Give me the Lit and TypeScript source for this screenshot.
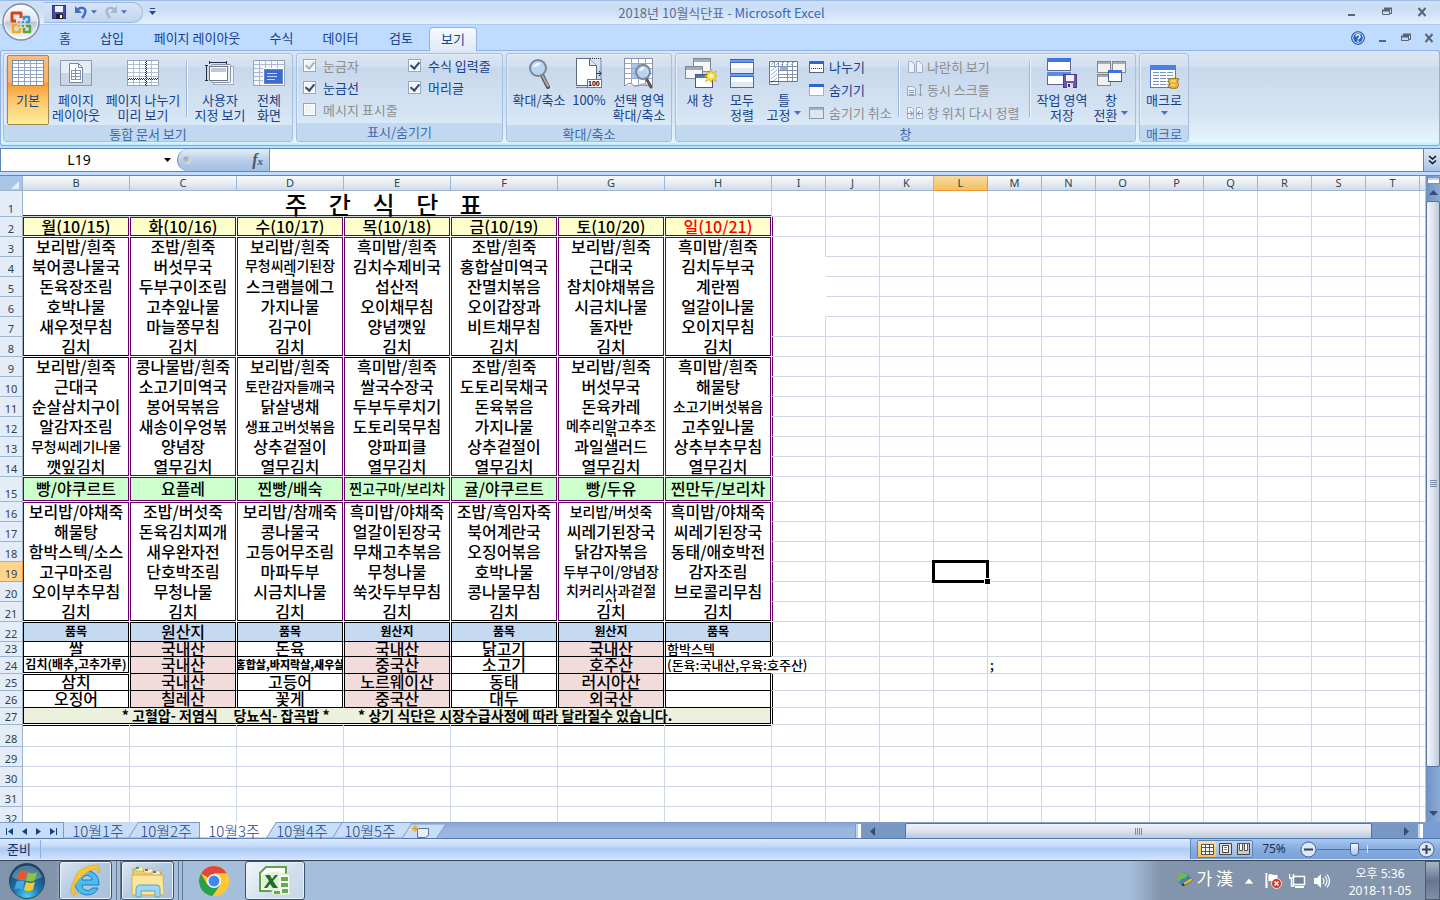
import { LitElement, html, css, nothing } from "lit";
import { customElement } from "lit/decorators.js";
import { classMap } from "lit/directives/class-map.js";
import { styleMap } from "lit/directives/style-map.js";

/* ---------- icons ---------- */

const lines = (xs: number[], ys: number[], x0: number, y0: number, x1: number, y1: number) =>
  xs.map((x) => `M${x} ${y0}V${y1}`).join("") + ys.map((y) => `M${x0} ${y}H${x1}`).join("");

const icoNormal = html`<svg width="34" height="32" viewBox="0 0 34 32">
  <rect x="1.5" y="3.5" width="31" height="25" fill="#fff" stroke="#7488a8"/>
  <path d="${lines([7.5, 13.5, 19.5, 25.5], [6.5, 10.5, 13.5, 17.5, 20.5, 24.5], 2, 4, 32, 28)}" stroke="#93a4c4" fill="none"/>
</svg>`;
const icoLayout = html`<svg width="34" height="32" viewBox="0 0 34 32">
  <rect x="1.5" y="3.5" width="31" height="25" fill="#e6ecf4" stroke="#8c9bb0"/>
  <path d="M2 16h30v12H2z" fill="#c9d6e6"/>
  <path d="M10.500 6.500h9l4 4v15h-13z" fill="#fff" stroke="#7b8798"/>
  <path d="M19.500 6.500v4h4" fill="none" stroke="#7b8798"/>
  <path d="M12 13.500h10M12 16.500h10M12 19.500h10M12 22.500h10M12.500 13v10M16.500 11v12M21.500 13v10" stroke="#8294b2" fill="none"/>
</svg>`;
const icoBreak = html`<svg width="34" height="32" viewBox="0 0 34 32">
  <rect x="1.500" y="3.500" width="31" height="25" fill="#fff" stroke="#96a3b5"/>
  <path d="${lines([7.5, 13.5, 25.5], [7.5, 11.5, 15.5, 19.5, 25.5], 2, 4, 32, 28)}" stroke="#b4c0d2" fill="none"/>
  <path d="M20.500 4v25M2 22.500h30" stroke="#222f4e" stroke-dasharray="1 1" fill="none"/>
  <path d="M19.500 5v24M3 21.500h30" stroke="#222f4e" stroke-dasharray="1 1" fill="none"/>
</svg>`;
const icoCustom = html`<svg width="34" height="32" viewBox="0 0 34 32">
  <rect x="10.500" y="9.500" width="20" height="18" fill="#f2f4f8" stroke="#a3abb8"/>
  <rect x="8.500" y="7.500" width="19" height="18" rx="1" fill="#e8ecf3" stroke="#8a94a6"/>
  <rect x="6.500" y="9.500" width="18" height="14" fill="#fff" stroke="#68758a"/>
  <rect x="8" y="11" width="15" height="4" fill="#c2c9d4"/>
  <path d="M6 5.500h18M6.500 4v3M23.500 4v3M3.500 8v16M2 8.500h3M2 23.500h3" stroke="#1f2c48" fill="none"/>
</svg>`;
const icoFull = html`<svg width="34" height="32" viewBox="0 0 34 32">
  <rect x="1.500" y="3.500" width="31" height="25" fill="#f3f6fa" stroke="#96a3b5"/>
  <path d="${lines([7.5, 13.5, 19.5, 25.5], [7.5, 11.5, 15.5, 19.5, 23.5], 2, 4, 32, 28)}" stroke="#adb8cb" fill="none"/>
  <rect x="11.500" y="11.500" width="20" height="16" fill="#5e86dc" stroke="#fff"/>
  <rect x="13" y="13" width="17" height="13" fill="#3e6bd0"/>
  <path d="M15 16.500h10M15 19.500h10M15 22.500h8" stroke="#c5d6fa"/>
</svg>`;
const icoZoom = html`<svg width="34" height="32" viewBox="-6 -1 34 32">
  <path d="M14 17l6 12" stroke="#5a5552" stroke-width="4" stroke-linecap="round"/>
  <path d="M14 17l6 11" stroke="#b3aaa4" stroke-width="2" stroke-linecap="round"/>
  <circle cx="10" cy="10" r="8" fill="#bcd6f1" stroke="#7a8797" stroke-width="2"/>
  <path d="M5 9a6 5 0 0 1 8-4c-2 3-5 4-8 4z" fill="#eef6ff"/>
</svg>`;
const ico100 = html`<svg width="34" height="32" viewBox="0 0 34 32">
  <path d="M4 1.500h25v28M4.500 30.500h25" fill="none" stroke="#26324c" stroke-dasharray="1 1"/>
  <path d="M4.500 1.500h13l7 7v20h-20z" fill="#fff" stroke="#5f6a7c"/>
  <path d="M17.500 1.500v7h7" fill="#dfe5ee" stroke="#5f6a7c"/>
  <path d="M24 16.500h5M27 14l2 2.500-2 2.500" stroke="#26324c" fill="none"/>
  <rect x="15.500" y="22.500" width="14" height="8" fill="#fff" stroke="#6c7688"/>
  <text x="16" y="29" font-size="7" font-weight="700" font-family="Liberation Sans, sans-serif">100</text>
</svg>`;
const icoZoomSel = html`<svg width="34" height="32" viewBox="0 0 34 32">
  <rect x="2.500" y="1.500" width="28" height="27" fill="#fff" stroke="#8793a8"/>
  <rect x="9" y="6" width="15" height="16" fill="#a9c3f3"/>
  <path d="${lines([9.5, 16.5, 23.5], [6.5, 11.5, 16.5, 21.5], 3, 2, 30, 28)}" stroke="#9ba9c2" fill="none"/>
  <path d="M3 29c4-4 6-3 8-1s5 1 7 0 5-2 7 0" fill="#eef1f5" stroke="#77808f"/>
  <path d="M24 21l5 9" stroke="#5a5552" stroke-width="3" stroke-linecap="round"/>
  <circle cx="21" cy="15" r="7" fill="#bcd6f1" fill-opacity=".85" stroke="#7a8797" stroke-width="2"/>
  <path d="M17 14a5 4 0 0 1 6-4c-1 3-3 4-6 4z" fill="#eef6ff"/>
</svg>`;
const icoNewWin = html`<svg width="34" height="32" viewBox="0 0 34 32">
  <rect x="10.500" y="1.500" width="17" height="13" fill="#f6f7fa" stroke="#7e8898"/><path d="M11 2h16v3H11z" fill="#a3abb8"/>
  <rect x="2.500" y="9.500" width="17" height="12" fill="#f6f7fa" stroke="#7e8898"/><path d="M3 10h16v3H3z" fill="#a3abb8"/>
  <rect x="12.500" y="17.500" width="17" height="13" fill="#fff" stroke="#4c5a78"/><path d="M13 18h16v3H13z" fill="#3f74dc"/>
  <path d="M28 12l1.500 4 4-2-2 4 3 1-3 1.500 2 4-4-2-1.500 3-1.500-3-4 2 2-4-3-1.500 3-1-2-4 4 2z" fill="#ffe23a" stroke="#d79f12" stroke-width=".7"/>
  <circle cx="28" cy="19" r="2" fill="#fffbe0"/>
</svg>`;
const icoArrange = html`<svg width="34" height="32" viewBox="0 0 34 32">
  <rect x="5.500" y="2.500" width="23" height="28" fill="#fff" stroke="#5a6a8c"/>
  <path d="M5 2h24v4H5zM5 16h24v4H5z" fill="#6c9cf0"/><path d="M5 2.500h24M5 16.500h24M5 19.500h24M5 5.500h24" stroke="#3a66c4"/>
  <path d="M6 11h22v5H6zM6 25h22v5H6z" fill="#e2e9f4"/>
</svg>`;
const icoFreeze = html`<svg width="34" height="32" viewBox="0 0 34 32">
  <path d="M2.500 4.500h28v20h-19v3h-9z" fill="#fff" stroke="#6b7890"/>
  <path d="${lines([20.5, 25.5], [9.5, 13.5, 17.5, 20.5], 11, 5, 30, 24)}M11.500 5v22M3 9.500h9M7.500 5v5M15.500 5v5" stroke="#8794aa" fill="none"/>
  <path d="M4 8l3-3M9 8l3-3M14 8l3-3M19 8l3-3M24 8l3-3M4 14l6-5M4 18l6-5M4 22l6-5M4 26l6-5" stroke="#93a9d0" fill="none"/>
  <path d="M13 10h8v3h-8z" fill="#8eb0f2"/>
  <path d="M2.500 24.500h9" stroke="#4c5a78"/>
</svg>`;
const icoWorkspace = html`<svg width="34" height="32" viewBox="0 0 34 32">
  <rect x="2.500" y="1.500" width="23" height="12" fill="#fff" stroke="#5a6a8c"/><path d="M2 1h24v4H2z" fill="#3f74dc"/>
  <rect x="2.500" y="15.500" width="23" height="12" fill="#fff" stroke="#5a6a8c"/><path d="M2 15h24v4H2z" fill="#5a8bea"/>
  <rect x="18.500" y="17.500" width="13" height="13" fill="#6c57a8" stroke="#4a3b86"/>
  <path d="M21 18h8v6h-8z" fill="#f2f0fa"/><path d="M22 26h6v5h-6z" fill="#dcd8ee"/><path d="M23 27h2v3h-2z" fill="#3b2d70"/>
</svg>`;
const icoSwitch = html`<svg width="34" height="32" viewBox="0 0 34 32">
  <g fill="#f1f1ef" stroke="#85888c"><rect x="3.500" y="4.500" width="13" height="11"/><rect x="18.500" y="4.500" width="13" height="11"/><rect x="3.500" y="17.500" width="13" height="11"/></g>
  <path d="M4 5h12v2H4zM19 5h12v2H19zM4 18h12v2H4z" fill="#a9acb0"/>
  <rect x="14.500" y="13.500" width="13" height="11" fill="#fff" stroke="#3d5fb0"/><path d="M15 13h13v3H15z" fill="#3f74dc"/>
</svg>`;
const icoMacro = html`<svg width="34" height="32" viewBox="0 0 34 32">
  <rect x="3.500" y="8.500" width="25" height="22" fill="#fff" stroke="#5d7ab8"/><path d="M3 8h26v5H3z" fill="#4a80e4"/>
  <path d="M6 15.500h20M6 18.500h20M6 21.500h20M6 24.500h20M6 27.500h20" stroke="#7792c6" stroke-dasharray="6 1"/>
  <path d="M22 22c3-1 7-1 10 0l-2 3c2 1 2 4 0 6-3 1-7 0-9-1l2-3c-2-1-2-3-1-5z" fill="#e9b63a" stroke="#93700f"/><path d="M24 24h5M24 28h4" stroke="#fff0b0"/>
</svg>`;

const icoSplit = html`<svg width="16" height="16" viewBox="0 0 16 16"><rect x=".5" y="2.500" width="14" height="11" fill="#fff" stroke="#54627e"/><path d="M0 2h15v3H0z" fill="#2f66d4"/><path d="M2 9.500h11" stroke="#222f4e" stroke-dasharray="1 1"/></svg>`;
const icoHide = html`<svg width="16" height="16" viewBox="0 0 16 16"><rect x=".5" y="2.500" width="14" height="11" fill="#fff" stroke="#777" stroke-dasharray="1 1"/><path d="M0 2h15v3H0z" fill="#2f66d4"/></svg>`;
const icoUnhide = html`<svg width="16" height="16" viewBox="0 0 16 16"><rect x=".5" y="2.500" width="14" height="11" fill="#dfe6f0" stroke="#8c98ac"/><path d="M1 3h13v2H1z" fill="#a4b0c6"/></svg>`;
const icoSide = html`<svg width="16" height="16" viewBox="0 0 16 16"><path d="M1.500 2.500h3l3 3v8h-6zM9.500 2.500h3l3 3v8h-6z" fill="#edf1f7" stroke="#a3aec2"/></svg>`;
const icoSync = html`<svg width="16" height="16" viewBox="0 0 16 16"><path d="M.5 4.500h5l3 2v7h-8z" fill="#edf1f7" stroke="#9ba6ba"/><path d="M2 8.500h5M2 10.500h5M2 12.500h5M13.500 2v12M11.500 4l2-2 2 2M11.500 12l2 2 2-2" stroke="#8d9ab2" fill="none"/></svg>`;
const icoReset = html`<svg width="16" height="16" viewBox="0 0 16 16"><path d="M.5 2.500h4l2 2v9h-6zM9.500 2.500h4l2 2v9h-6z" fill="#edf1f7" stroke="#a3aec2"/><path d="M0 8.500h5M3 6l3 2.500L3 11M16 8.500h-5M13 6l-3 2.500 3 2.500" stroke="#7e8dab" fill="none"/></svg>`;

const officeOrb = html`<svg width="40" height="42" viewBox="0 0 40 42">
  <defs>
    <linearGradient id="orb" x1="0" y1="0" x2="0" y2="1"><stop offset="0" stop-color="#fdfdfe"/><stop offset=".48" stop-color="#dfe3ea"/><stop offset=".5" stop-color="#bcc6d6"/><stop offset="1" stop-color="#fff"/></linearGradient>
  </defs>
  <circle cx="20" cy="21" r="18" fill="url(#orb)" stroke="#7e8fa9" stroke-width="1.500"/>
  <circle cx="20" cy="21" r="16.500" fill="none" stroke="#fff" stroke-opacity=".7"/>
  <g fill="none" stroke-linejoin="round">
    <path d="M15 20h-4v-8h9v5" stroke="#d8421a" stroke-width="3"/>
    <path d="M23 19v-3h5v5h-3" stroke="#3b92d6" stroke-width="2.500"/>
    <path d="M16 24h-4v7h7v-4" stroke="#f4ac1c" stroke-width="2.500"/>
    <path d="M23 27v4h6v-6h-4" stroke="#5aa63a" stroke-width="2.500"/>
  </g>
  <path d="M17 20h2v2h-2z" fill="#ef8b2e"/><path d="M21 20h2v2h-2z" fill="#3b92d6"/><path d="M17 24h2v2h-2z" fill="#f4ac1c"/><path d="M21 24h2v2h-2z" fill="#5aa63a"/>
</svg>`;
const icoSave = html`<svg width="16" height="16" viewBox="0 0 16 16"><rect x="1.500" y="1.500" width="13" height="13" fill="#4a49a8" stroke="#32317e"/><path d="M4 2h8v6H4z" fill="#eef2fb"/><path d="M5 10h7v5H5z" fill="#222"/><path d="M9 11h2v3H9z" fill="#fff"/></svg>`;
const icoUndo = html`<svg width="16" height="16" viewBox="0 0 16 16"><path d="M4 6c4-4 10-2 8 3-.4 2-1.500 3.500-3 5" fill="none" stroke="#3e6fc4" stroke-width="2.500"/><path d="M2 2v7h7z" fill="#3e6fc4"/></svg>`;
const icoRedo = html`<svg width="16" height="16" viewBox="0 0 16 16"><path d="M12 6c-4-4-10-2-8 3 .4 2 1.500 3.500 3 5" fill="none" stroke="#a9b7cd" stroke-width="2.500"/><path d="M14 2v7H7z" fill="#a9b7cd"/></svg>`;
const icoCaret = html`<svg class="caret" width="7" height="4" viewBox="0 0 7 4"><path d="M0 0h7L3.500 4z" fill="currentColor"/></svg>`;
const icoQatMore = html`<svg width="7" height="8" viewBox="0 0 7 8"><path d="M1 .500h5" stroke="#2b4a80"/><path d="M0 3h7L3.500 7z" fill="#2b4a80"/></svg>`;
const icoMin = html`<svg width="10" height="10" viewBox="0 0 10 10"><path d="M1 8h7" stroke="#5b6572" stroke-width="2"/></svg>`;
const icoRestore = html`<svg width="10" height="10" viewBox="0 0 10 10"><path d="M2.500 3V1.500h7v5H8" fill="none" stroke="#5b6572"/><path d="M2 1.500h8M0 3.500h8" stroke="#5b6572" stroke-width="2"/><path d="M.5 3.500h7v4h-7z" fill="none" stroke="#5b6572"/></svg>`;
const icoClose = html`<svg width="10" height="10" viewBox="0 0 10 10"><path d="M1.500 1l7 8M8.500 1l-7 8" stroke="#5b6572" stroke-width="2"/></svg>`;
const icoHelp = html`<svg width="14" height="14" viewBox="0 0 14 14"><circle cx="7" cy="7" r="6.300" fill="#2a66c8" stroke="#1d4a98"/><circle cx="7" cy="7" r="5.200" fill="none" stroke="#d9e8ff"/><path d="M5 5.500c.2-2.500 4.200-2.200 4 .2C8.900 7 7.200 7 7 8.500M7 9.500v1.500" stroke="#fff" stroke-width="1.400" fill="none"/></svg>`;
const icoChevrons = html`<svg width="9" height="10" viewBox="0 0 9 10"><path d="M1 1l3.500 3L8 1M1 5.500l3.500 3L8 5.500" stroke="#111" stroke-width="1.500" fill="none"/></svg>`;

const icoStart = html`<svg width="38" height="38" viewBox="0 0 38 38">
  <defs><radialGradient id="st" cx=".5" cy=".95" r=".95"><stop offset="0" stop-color="#4fd4f5"/><stop offset=".4" stop-color="#1d77b0"/><stop offset="1" stop-color="#123a63"/></radialGradient></defs>
  <circle cx="19" cy="19" r="17.500" fill="url(#st)" stroke="#2c4460"/>
  <path d="M4 15a15.500 15.500 0 0 1 30 0c-8 5-22 5-30 0z" fill="#fff" opacity=".28"/>
  <path d="M11 10c3-2 5-1.500 8 0l-2 8c-3-1.500-5-1.500-8 0z" fill="#e8582a"/>
  <path d="M20 10.500c3 1.500 6 1.500 9-.5l-2 8c-3 2-6 2-9 .5z" fill="#8cc63f"/>
  <path d="M8.500 19.500c3-1.500 5-1.500 8 0l-2 8c-3-1.500-5-1.500-8 0z" fill="#43a7e6"/>
  <path d="M18 20c3 1.500 6 1.500 9-.5l-2 8c-3 2-6 2-9 .5z" fill="#fcc92d"/>
</svg>`;
const icoIE = html`<svg width="34" height="34" viewBox="0 0 34 34">
  <path d="M30 21H13c0 6 8 7 10 3h6c-3 10-23 10-23-6C7 2 31 3 30 21zM13 16h10c0-6-10-6-10 0z" fill="#4cbcf0" stroke="#1a7cc0"/>
  <path d="M9 8C16 2 30-2 31 4c.5 2-1 5-2 6 .5-2 1-5-2-5-7 0-21 11-22 20-1 5 4 4 7 2-4 5-11 5-10-1C3 20 6 13 9 8z" fill="#fbc62c" stroke="#dfa016" stroke-width=".6"/>
</svg>`;
const icoFolder = html`<svg width="36" height="34" viewBox="0 0 36 34">
  <path d="M3 5h9l2 3h17v22H3z" fill="#f0cf74" stroke="#c99f38"/>
  <path d="M6 3h7v4H6zM14 5h9v4h-9zM22 7h8v4h-8z" fill="#fdf4cf" stroke="#c9a94c" stroke-width=".6"/>
  <path d="M6 3h3v2H6z" fill="#2eb04c"/><path d="M15 5h3v2h-3z" fill="#d9432f"/><path d="M23 7h3v2h-3z" fill="#3b82d8"/>
  <path d="M2 11h31l1 18c0 1-1 2-2 2H4c-1 0-2-1-2-2z" fill="#fae69c" stroke="#d4ae4c"/>
  <path d="M6 33v-8c0-3 2-4 4-4h16c3 0 4 1 4 4v8h-5v-6H11v6z" fill="#9fd7f0" stroke="#5aa2cb"/>
</svg>`;
const icoChrome = html`<svg width="32" height="32" viewBox="0 0 32 32">
  <circle cx="16" cy="16" r="15" fill="#fcc934"/>
  <path d="M16 16L3 8.500A15 15 0 0 1 29 8.500H16z" fill="#e2463a"/>
  <path d="M3 8.500L9.500 19.750 16 23.500 14.500 31A15 15 0 0 1 3 8.500z" fill="#2aa04f"/>
  <path d="M14.500 31l8-11.250L16 16l-6.500 3.750z" fill="#2aa04f"/>
  <path d="M29 8.500H16v7.500l6.500 3.750L15 31A15 15 0 0 0 29 8.500z" fill="#fcc934"/>
  <circle cx="16" cy="16" r="7" fill="#fff"/><circle cx="16" cy="16" r="5.500" fill="#4387f0"/>
</svg>`;
const icoExcel = html`<svg width="34" height="32" viewBox="0 0 34 32">
  <path d="M8 2h20v24H2V8z" fill="#fff" stroke="#5aa544" stroke-width="2"/>
  <path d="M20 9h12v21H14v-5h6z" fill="#f6faf3" stroke="#c7d9bd"/>
  <path d="M4 9l17-3v20L4 22z" fill="#dff0d5"/>
  <path d="M7 10h5l2 4 3-4h3l-5 6 5 7h-5l-3-4-3 4H6l5-7z" fill="#226b2c"/>
  <path d="M23 12h7v4h-7zM23 18h7v4h-7zM16 26h6v3h-6zM24 24h6v4h-6z" fill="#6aa856"/>
</svg>`;
const icoPen = html`<svg width="18" height="18" viewBox="0 0 18 18"><circle cx="8" cy="7" r="6.500" fill="#3f82c4"/><path d="M3 3c3-3 8-2 9 0l-3 3-4 1-2 3-2-3z" fill="#6fbf44"/><path d="M6 14l1-3 8-5 2 2-8 5z" fill="#f1c24a" stroke="#8a5a18" stroke-width=".7"/><path d="M6 14l1-3 2 2z" fill="#222"/></svg>`;
const icoUp = html`<svg class="up" width="10" height="6" viewBox="0 0 10 6"><path d="M0 6h10L5 0z" fill="#fff" stroke="#5b6b80" stroke-width=".5"/></svg>`;
const icoFlag = html`<svg width="17" height="17" viewBox="0 0 17 17"><path d="M1.500 1v15" stroke="#fff" stroke-width="2"/><path d="M3 2c3-2 5 2 10 0v8c-5 2-7-2-10 0z" fill="#fff" stroke="#5a6574" stroke-width=".6"/><circle cx="11.500" cy="11.500" r="5" fill="#d8342a" stroke="#fff" stroke-width=".8"/><path d="M9.500 9.500l4 4M13.500 9.500l-4 4" stroke="#fff" stroke-width="1.500"/></svg>`;
const icoNet = html`<svg width="17" height="16" viewBox="0 0 17 16"><rect x="4.500" y="3.500" width="11" height="8" fill="#6f829b" stroke="#fff" stroke-width="1.500"/><path d="M6 14h9" stroke="#fff" stroke-width="2"/><path d="M.5 1v4h4V1M2.500 5v8h3" stroke="#fff" stroke-width="1.400" fill="none"/></svg>`;
const icoSound = html`<svg width="17" height="16" viewBox="0 0 17 16"><path d="M1 5h3l4-4v14l-4-4H1z" fill="#fff"/><path d="M10 5q2 3 0 6M12 3q4 5 0 10M14 1.500q5 6.500 0 13" stroke="#fff" stroke-width="1.200" fill="none"/></svg>`;

/* ---------- sheet data ---------- */

const MENU_COLS = 7;
const ROW_HEIGHTS: Record<number, number> = { 1: 26, 15: 25, 23: 15, 24: 17, 25: 17, 26: 17, 27: 17, 28: 22 };
const heightOf = (row: number) => ROW_HEIGHTS[row] ?? 20;

/* "~" marks text shrunk one step, "_" two steps, "," three steps, "^" text that wraps in its cell */
const MENU: Record<number, string> = {
  2: "월(10/15) 화(10/16) 수(10/17) 목(10/18) 금(10/19) 토(10/20) 일(10/21)",
  3: "보리밥/흰죽 조밥/흰죽 보리밥/흰죽 흑미밥/흰죽 조밥/흰죽 보리밥/흰죽 흑미밥/흰죽",
  4: "북어콩나물국 버섯무국 ^무청씨레기된장국 김치수제비국 홍합살미역국 근대국 김치두부국",
  5: "돈육장조림 두부구이조림 스크램블에그 섭산적 잔멸치볶음 참치야채볶음 계란찜",
  6: "호박나물 고추잎나물 가지나물 오이채무침 오이갑장과 시금치나물 얼갈이나물",
  7: "새우젓무침 마늘쫑무침 김구이 양념깻잎 비트채무침 돌자반 오이지무침",
  8: "김치 김치 김치 김치 김치 김치 김치",
  9: "보리밥/흰죽 콩나물밥/흰죽 보리밥/흰죽 흑미밥/흰죽 조밥/흰죽 보리밥/흰죽 흑미밥/흰죽",
  10: "근대국 소고기미역국 ~토란감자들깨국 쌀국수장국 도토리묵채국 버섯무국 해물탕",
  11: "순살삼치구이 봉어묵볶음 닭살냉채 두부두루치기 돈육볶음 돈육카레 ~소고기버섯볶음",
  12: "알감자조림 새송이우엉볶 ~생표고버섯볶음 도토리묵무침 가지나물 ^메추리알고추조림 고추잎나물",
  13: "~무청씨레기나물 양념장 상추겉절이 양파피클 상추겉절이 과일샐러드 상추부추무침",
  14: "깻잎김치 열무김치 열무김치 열무김치 열무김치 열무김치 열무김치",
  15: "빵/야쿠르트 요플레 찐빵/배숙 ~찐고구마/보리차 귤/야쿠르트 빵/두유 찐만두/보리차",
  16: "보리밥/야채죽 조밥/버섯죽 보리밥/참깨죽 흑미밥/야채죽 조밥/흑임자죽 ~보리밥/버섯죽 흑미밥/야채죽",
  17: "해물탕 돈육김치찌개 콩나물국 얼갈이된장국 북어계란국 씨레기된장국 씨레기된장국",
  18: "함박스텍/소스 새우완자전 고등어무조림 무채고추볶음 오징어볶음 닭감자볶음 동태/애호박전",
  19: "고구마조림 단호박조림 마파두부 무청나물 호박나물 ~두부구이/양념장 감자조림",
  20: "오이부추무침 무청나물 시금치나물 쑥갓두부무침 콩나물무침 ^치커리사과겉절이 브로콜리무침",
  21: "김치 김치 김치 김치 김치 김치 김치",
  22: "_품목 원산지 _품목 _원산지 _품목 _원산지 _품목",
  23: "쌀 국내산 돈육 국내산 닭고기 국내산 함박스텍",
  24: "_김치(배추,고추가루) 국내산 ,홍합살,바지락살,새우살 중국산 소고기 호주산 (돈육:국내산,우육:호주산)",
  25: "삼치 국내산 고등어 노르웨이산 동태 러시아산",
  26: "오징어 칠레산 꽃게 중국산 대두 외국산",
};
const TITLE = "주    간    식    단    표     ";
const NOTICE = "* 고혈압- 저염식     당뇨식- 잡곡밥 *         * 상기 식단은 시장수급사정에 따라 달라질수 있습니다.";
const SIZE_CLASS: Record<string, string> = { "~": "s14", _: "s12", ",": "s11", "^": "wrap" };
const BLOCK_TOPS = [2, 3, 9, 15, 16, 22];
const BLOCK_ENDS = [2, 8, 14, 15, 21];

const COLS = "BCDEFGHIJKLMNOPQRSTUVWXYZ".split("").concat(["AA", "AB", "AC", "AD", "AE", "AF", "AG", "AH"]);
const ROWS = Array.from({ length: 45 }, (_, i) => i + 1);

@customElement("excel-sheet")
class ExcelSheet extends LitElement {
  static styles = css`
    :host { display: block; flex: 1; min-width: 0; overflow: hidden; background: #fff; }
    table { border-collapse: separate; border-spacing: 0; table-layout: fixed; width: 0; }
    th, td { padding: 0; box-sizing: border-box; border: 0 solid #d0d7e5; border-width: 0 1px 1px 0; position: relative; }
    th { font: 400 11px/15px "Noto Sans", "Noto Sans CJK KR", sans-serif; color: #2c4350; border-color: #9eb6ce; text-align: center; }
    thead th { height: 15px; line-height: 14px; background: linear-gradient(#f8fafc, #e4eaf2 60%, #d2dae7); }
    thead th.on { background: linear-gradient(#f9d99f, #f1c15f); border-color: #f29536; }
    tbody th { background: #e4ecf7; }
    tbody th div { display: flex; align-items: end; justify-content: center; }
    tbody th.on { background: #ffd58d; border-color: #f29536; }
    .corner { background: #a9c4e9; }
    .corner svg { display: block; margin: 3px 3px 0 auto; }
    .w-head { width: 23px; }
    .w-menu { width: 107px; }
    .w-cell { width: 54px; }
    .box { display: flex; align-items: center; justify-content: center; box-sizing: border-box; white-space: pre; color: #000;
      font: 500 16px/16px "Noto Sans CJK KR", sans-serif; padding-bottom: 2px; }
    .s14 .box { font-size: 14px; }
    .s12 .box { font-size: 12px; font-weight: 700; }
    .s11 .box { font-size: 11px; font-weight: 900; overflow: hidden; }
    .wrap .box { font-size: 14px; line-height: 14px; white-space: normal; word-break: break-all; text-align: center; align-items: start; padding: 0 6px; overflow: hidden; }
    .title .box { font-size: 24px; line-height: 24px; padding: 0; }
    .notice .box { font-size: 14px; font-weight: 700; }
    .note .box { font-size: 13px; justify-content: start; padding: 0 0 0 2px; }
    .spill { z-index: 1; }
    .framed { --l: transparent; --r: transparent; --t: transparent; --b: transparent;
      box-shadow: inset 1px 0 var(--l), inset -1px 0 var(--r), inset 0 1px var(--t), inset 0 -1px var(--b); }
    .plain { border-color: #fff; }
    .joined { border-bottom-width: 0; }
    .rule { border-bottom-color: #000; }
    .no-r { border-right-color: #fff; }
    .no-b { border-bottom-color: #fff; }
    .lp { --l: #660066; } .rp { --r: #660066; } .tp { --t: #660066; } .bp { --b: #660066; }
    .lk { --l: #000; } .rk { --r: #000; } .tk { --t: #000; } .bk { --b: #000; }
    .yellow { background: #ffffcc; background-clip: padding-box; }
    .green { background: #ccffcc; background-clip: padding-box; }
    .blue { background: #c5d9f1; background-clip: padding-box; }
    .pink { background: #f2dcdb; background-clip: padding-box; }
    .olive { background: #ebf1dd; background-clip: padding-box; }
    .red .box { color: #f00; }
    .cursor { position: absolute; inset: -2px; border: 3px solid #000; z-index: 2; }
    .cursor::after { content: ""; position: absolute; right: -5px; bottom: -5px; width: 5px; height: 5px; background: #000; border: 1px solid #fff; }
  `;

  private menuCell(row: number, c: number) {
    const raw = (MENU[row] ?? "").split(" ")[c] ?? "";
    const size = SIZE_CLASS[raw[0]];
    const text = size ? raw.slice(1) : raw;
    const supply = row >= 22;
    const midBlack = c !== 1;
    const top = BLOCK_TOPS.includes(row) || (row === 25 && c === 0);
    const end = BLOCK_ENDS.includes(row) || (row === 24 && c === 0);
    const topBlack = supply || (row === 9 && midBlack);
    const endBlack = supply || row === 21 || (row === 8 && midBlack);
    const open = row === 24 && c === 6;
    const cls: Record<string, boolean> = {
      framed: true,
      plain: true,
      joined: !supply && !end,
      rule: supply && !end,
      lp: !supply, rp: !supply,
      lk: supply, rk: supply && !open,
      tp: top && !topBlack, tk: top && topBlack,
      bp: end && !endBlack, bk: end && endBlack,
      yellow: row === 2,
      red: row === 2 && c === 6,
      green: row === 15,
      blue: row === 22,
      pink: row > 22 && c % 2 === 1,
      note: row > 22 && c === 6,
      spill: open,
    };
    if (size) cls[size] = true;
    return html`<td class=${classMap(cls)}>${text ? html`<div class="box" style=${styleMap({ height: `${heightOf(row) - 1}px` })}>${text}</div>` : nothing}</td>`;
  }

  private outerCell(row: number, c: number) {
    const first = c === MENU_COLS;
    const gap = first && row >= 3 && row <= 6;
    const cls: Record<string, boolean> = {
      framed: first || (row === 28 && c < MENU_COLS),
      lp: first && row >= 2 && row <= 21,
      lk: first && row >= 22 && row <= 27 && row !== 24,
      tk: row === 28 && c < MENU_COLS,
      "no-r": gap && row > 3,
      joined: gap,
      note: row === 24 && COLS[c] === "M",
    };
    const active = row === 19 && COLS[c] === "L";
    return html`<td class=${classMap(cls)}>${cls.note ? html`<div class="box">;</div>` : nothing}${active ? html`<div class="cursor"></div>` : nothing}</td>`;
  }

  private row(row: number) {
    const from = row === 1 || row === 27 ? MENU_COLS : 0;
    const h = styleMap({ height: `${heightOf(row) - 1}px` });
    return html`<tr>
      <th scope="row" class=${row === 19 ? "on" : ""}><div style=${h}>${row}</div></th>
      ${row === 1 ? html`<td colspan="7" class="title framed bp"><div class="box" style=${h}>${TITLE}</div></td>` : nothing}
      ${row === 27 ? html`<td colspan="7" class="notice framed plain olive lk rk bk"><div class="box" style=${h}>${NOTICE}</div></td>` : nothing}
      ${COLS.slice(from).map((_, i) => {
        const c = i + from;
        return c < MENU_COLS && row > 1 && row < 27 ? this.menuCell(row, c) : this.outerCell(row, c);
      })}
    </tr>`;
  }

  render() {
    return html`<table>
      <colgroup><col class="w-head">${COLS.map((_, i) => html`<col class=${i < MENU_COLS ? "w-menu" : "w-cell"}>`)}</colgroup>
      <thead><tr><th class="corner"><svg width="8" height="8" viewBox="0 0 8 8"><path d="M8 0v8H0z" fill="#e6eefa"/></svg></th>
        ${COLS.map((n) => html`<th scope="col" class=${n === "L" ? "on" : ""}>${n}</th>`)}</tr></thead>
      <tbody>${ROWS.map((r) => this.row(r))}</tbody>
    </table>`;
  }
}

/* ---------- window ---------- */

@customElement("app-root")
class AppRoot extends LitElement {
  static styles = css`
    :host { display: flex; flex-direction: column; width: 100%; height: 100vh; overflow: hidden; background: #bfdbff; color: #15428b;
      font: 400 13px/15px "Noto Sans CJK KR", sans-serif; }
    * { box-sizing: border-box; }
    button { font: inherit; color: inherit; background: none; border: 0; padding: 0; margin: 0; display: flex; align-items: center; justify-content: center; white-space: nowrap; }
    svg { display: block; flex: none; }
    .grow { flex: 1; }

    .titlebar { display: flex; align-items: center; height: 25px; flex: none; position: relative;
      background: linear-gradient(#9cbce8 0 1px, #cfe0f6 1px, #cadef7 40%, #e4effc); border-bottom: 1px solid #a9cbf5; }
    .orb { position: absolute; left: 1px; top: 1px; z-index: 3; }
    .qat { display: flex; align-items: center; height: 21px; margin-left: 44px; padding: 0 8px 0 7px; gap: 6px; width: 99px;
      border: 1px solid #9fb9dc; border-left: 0; border-radius: 0 11px 11px 0; background: linear-gradient(#d6e4f6, #c3d6ee); }
    .qat button { color: #6f86b2; }
    .qat .caret { margin-left: 2px; width: 6px; }
    .more { margin-left: 6px; }
    .title { flex: 1; text-align: center; font-size: 13px; color: #5f6f88; padding-right: 60px; }
    .title b { font-weight: 400; color: #3e6aaa; }
    .winbtns { display: flex; gap: 25px; padding-right: 13px; }

    .tabs { display: flex; align-items: end; height: 25px; flex: none; padding-left: 45px; }
    .tab { height: 24px; padding: 0 14px 1px; }
    .tab.on { background: linear-gradient(#f6fafe, #dfe9f6); border: 1px solid #8db2e3; border-bottom: 0; border-radius: 4px 4px 0 0; padding: 0 11px 2px; margin-bottom: -1px; position: relative; z-index: 1; }
    .w1 { width: 40px; } .w2 { width: 54px; } .w3 { width: 116px; } .w4 { width: 53px; } .w5 { width: 65px; } .w6 { width: 56px; } .w7 { width: 48px; }
    .docbtns { display: flex; align-items: center; gap: 13px; align-self: center; padding-right: 6px; }

    .ribbon { display: flex; gap: 3px; height: 96px; flex: none; padding: 2px 2px 3px; border: 1px solid #8db2e3; border-bottom-color: #8aa6c8; border-radius: 3px;
      background: linear-gradient(#dbe6f4, #d3e0f0 16%, #c8d8ec 18%, #d6e5f4 70%, #e3f5fe 96%, #b9f0fa); margin-bottom: 2px; }
    .group { display: flex; flex-direction: column; border: 1px solid #a5bfdc; border-radius: 3px; box-shadow: inset 1px 1px #e6eff9; overflow: hidden; }
    .items { flex: 1; display: flex; align-items: stretch; padding: 1px 3px 0; }
    .caption { height: 18px; background: #c1d8f0; color: #3e6aaa; text-align: center; line-height: 17px; flex: none; }
    .big { flex-direction: column; justify-content: start; height: 70px; padding-top: 1px; line-height: 15px; border: 1px solid transparent; border-radius: 2px; }
    .big svg:first-child { margin-bottom: 3px; }
    .big span { display: flex; align-items: center; gap: 4px; height: 15px; }
    .big.on { border-color: #a08652; background: linear-gradient(#f3bd86, #fbb168 38%, #f89936 40%, #fcc264 62%, #fdee9e); }
    .caret { color: #4a72b4; }
    .sep { width: 2px; margin: 6px 3px 8px; border-left: 1px solid #9ab6d8; border-right: 1px solid #eef5fc; flex: none; }
    .b40 { width: 40px; } .b42 { width: 42px; } .b54 { width: 54px; } .b56 { width: 56px; } .b58 { width: 58px; } .b80 { width: 80px; }
    .checks { display: grid; grid-template-columns: 105px 1fr; grid-auto-rows: 22px; padding: 0 6px; width: 205px; }
    .checks label { display: flex; align-items: center; gap: 7px; white-space: nowrap; }
    .checks input { appearance: none; width: 13px; height: 13px; margin: 0; border: 1px solid #9aa7b8; background: #f0f3f7; box-shadow: inset 0 0 0 1px #fff; display: grid; place-items: center; }
    .checks input:checked::before { content: ""; width: 4px; height: 7px; border: solid #2b4a80; border-width: 0 2px 2px 0; rotate: 40deg; margin-top: -2px; }
    .checks .dim input:checked::before { border-color: #a9b3c2; }
    .dim { color: #8d8d8d; }
    .small { display: grid; grid-auto-rows: 23px; align-content: start; justify-items: start; }
    .small button { gap: 4px; }
    .small.first { width: 86px; margin-left: 4px; }
    .small.second { width: 119px; margin-left: 4px; }

    .formula { display: flex; height: 24px; flex: none; background: #fff; border: 1px solid #5f87b5; border-right: 0; margin-bottom: 3px; }
    .formula input { border: 0; outline: 0; padding: 0; margin: 0; background: none; font: 400 14px/20px "Noto Sans", "Noto Sans CJK KR", sans-serif; color: #000; }
    .name { width: 156px; text-align: center; }
    .drop { width: 20px; color: #000; }
    .drop .caret { color: #000; }
    .fx { display: flex; align-items: center; justify-content: space-between; width: 93px; border: 1px solid #6d93c0; border-width: 0 1px 0 1px; border-radius: 12px 0 0 12px; padding: 0 6px 0 5px; background: linear-gradient(#e4edf8, #b3cae8 60%, #a3bfe3); }
    .dot { width: 8px; height: 8px; border-radius: 50%; background: radial-gradient(circle at 30% 30%, #9aa4b2, #eef2f7); }
    .fx i { font: italic 700 16px/20px "Liberation Serif", serif; color: #4c5666; }
    .fx sub { font-size: 11px; vertical-align: baseline; }
    .formula .entry { flex: 1; min-width: 0; padding: 0 4px; }
    .expand { width: 17px; border-left: 1px solid #5f87b5; background: linear-gradient(#dfe9f6, #a9c3e6); }

    .work { flex: 1; min-height: 0; display: flex; border-top: 1px solid #5f87b5; background: #fff; }
    .vscroll { width: 15px; display: flex; flex-direction: column; align-items: center; background: linear-gradient(90deg, #6f92c2, #8aabd8); border-left: 1px solid #a7c8ef; padding: 1px 0 0; flex: none; }
    .split { width: 13px; height: 7px; background: #fff; border: 1px solid #7893bb; flex: none; box-shadow: inset 0 2px #c3d5ee; }
    .vscroll > svg { margin: 6px 0; }
    .thumb-v { align-self: stretch; flex: 566 0 0; border: 1px solid #5573a4; border-radius: 2px; background: linear-gradient(90deg, #f3f5f9, #dde4ee 50%, #bcc9da); display: grid; place-items: center; }
    .rest-v { flex: 38 0 0; }

    .bottom { display: grid; grid-template-columns: 855fr 585fr; height: 16px; flex: none; background: linear-gradient(#86a8d6, #9ab5de 40%, #9db8df); border-top: 1px solid #7d9cc8; }
    .sheets { display: flex; align-items: stretch; min-width: 0; }
    .nav { display: flex; align-items: center; width: 63px; padding: 0 0 1px 6px; gap: 9px; background: #c9ddf6; color: #15428b; }
    .sheet { position: relative; width: 68px; font-size: 15px; line-height: 15px; z-index: 1; padding: 0 0 2px 2px; font-weight: 300; }
    .sheet svg { position: absolute; left: 0; top: 0; z-index: -1; }
    .sheet.on { z-index: 2; }
    .hscroll { display: flex; align-items: center; min-width: 0; background: #7898c3; }
    .grip-h { width: 7px; align-self: stretch; border: 1px solid #7b9cc9; background: #fff; box-shadow: inset 2px 0 #c3d5ee; flex: none; }
    .thumb-h { flex: 467 0 0; align-self: stretch; border: 1px solid #5573a4; border-radius: 2px; background: linear-gradient(#f0f3f7, #dde4ed 45%, #b6c5d8); display: grid; place-items: center; }
    .space-l { flex: 22 0 0; }
    .space-r { flex: 24 0 0; }
    .hscroll svg.arrow { margin: 0 8px; }
    .corner-h { width: 16px; align-self: stretch; background: #7a9ed4; flex: none; }

    .status { display: flex; align-items: center; height: 22px; flex: none; border-top: 1px solid #4f79b4; border-bottom: 1px solid #dce9fa; padding-left: 7px;
      background: linear-gradient(#dfebfb, #c4dafa 35%, #accbf4 50%, #cfe2fb); color: #15305f; }
    .status .ready { padding-right: 9px; border-right: 1px solid #8fb0de; line-height: 18px; }
    .zoom { display: flex; align-items: center; height: 20px; padding: 0 5px 0 6px; border-left: 1px solid #5f87bd; background: linear-gradient(#a9c6ef, #86acde 50%, #7ba3d9); width: 250px; }
    .views { display: flex; border: 1px solid #5c80b5; border-radius: 2px; height: 18px; }
    .views button { width: 18px; background: linear-gradient(#c3d6ef, #9ab7de); }
    .views button.on { background: linear-gradient(#fbe0a0, #f5bf54); }
    .pct { width: 26px; margin: 0 13px 0 8px; font: 400 12px/18px "Noto Sans", sans-serif; text-align: center; }
    .zoom input { appearance: none; width: 102px; height: 16px; margin: 0; flex: 1; min-width: 0;
      background: linear-gradient(#d5e4f8, #d5e4f8) 50% 50% / 1px 8px no-repeat, linear-gradient(#52749f, #52749f) 0 50% / 100% 1px no-repeat; }
    .zoom input::-webkit-slider-thumb { appearance: none; width: 9px; height: 13px; background: linear-gradient(#f5f9fe, #a9c3e8); border: 1px solid #466797; border-radius: 1px 1px 5px 5px; }

    .taskbar { display: flex; align-items: stretch; height: 40px; flex: none; border-top: 1px solid #38445a; color: #fff;
      background: linear-gradient(90deg, #8294ab 0 56px, #a5bedc 64px, #a5bedc calc(100% - 310px), #8395ad calc(100% - 280px)); }
    .start { width: 54px; }
    .task { border: 1px solid #3f4f66; border-radius: 3px; background: linear-gradient(135deg, #dbe6f2, #b2c8e1 50%, #a8c0dc); box-shadow: inset 0 0 0 1px #e9f1f9; }
    .t1 { width: 53px; margin-left: 5px; }
    .stack { width: 9px; border-right: 1px solid #64788f; position: relative; }
    .stack::before { content: ""; position: absolute; inset: 0 3px 0 0; border-right: 1px solid #64788f; }
    .t2 { width: 53px; }
    .t3 { width: 62px; }
    .t4 { width: 60px; background: linear-gradient(135deg, #f2f6fa, #d0deed 60%, #c6d7e9); }
    .tray { display: flex; align-items: center; gap: 7px; }
    .ime { font-size: 17px; line-height: 20px; margin: 0 4px 6px -4px; }
    .up { margin-right: 4px; }
    .clock { font: 400 12px/17px "Noto Sans", "Noto Sans CJK KR", sans-serif; text-align: center; margin-left: 9px; width: 68px; padding-top: 2px; white-space: nowrap; }
    .peek { width: 15px; margin-left: 11px; border: 1px solid #4c5b70; background: linear-gradient(#a9b5c4, #66768c 50%, #7f90a6); }
  `;

  private big(icon: unknown, width: string, l1: string, l2 = "", menu = false, on = false) {
    return html`<button class="big ${width} ${on ? "on" : ""}">${icon}<span>${l1}</span>${l2 || menu ? html`<span>${l2}${menu ? icoCaret : nothing}</span>` : nothing}</button>`;
  }
  private check(label: string, checked: boolean, dim = false) {
    return html`<label class=${dim ? "dim" : ""}><input type="checkbox" .checked=${checked} ?disabled=${dim}>${label}</label>`;
  }
  private tab(label: string, w: string, on = false) {
    return html`<button class="tab ${w} ${on ? "on" : ""}">${label}</button>`;
  }
  private sheetTab(label: string, i: number) {
    const on = i === 2;
    const d = i === 0 ? "M.5-1v16h66l10-16" : on ? "M.5-1v16h67l10-16" : "M-2.500 15L7.500-1M-2.500 15h70l10-16";
    const fill = i === 0 || on ? "M0-1h77l-10 16H0z" : "M7 0h70l-10 15H-3z";
    return html`<button class="sheet ${on ? "on" : ""}"><svg width="80" height="15" viewBox="0 0 80 15" overflow="visible">
      <path d=${fill} fill=${on ? "#fff" : "#c9ddf6"}/><path d=${d} fill="none" stroke="#7c9cca"/></svg>${label}</button>`;
  }

  render() {
    return html`
      <header class="titlebar">
        <button class="orb" aria-label="Office">${officeOrb}</button>
        <div class="qat">
          <button aria-label="저장">${icoSave}</button>
          <button aria-label="실행 취소">${icoUndo}${icoCaret}</button>
          <button aria-label="다시 실행">${icoRedo}${icoCaret}</button>
        </div>
        <button class="more" aria-label="도구 모음">${icoQatMore}</button>
        <div class="title">2018년 10월식단표 - <b>Microsoft Excel</b></div>
        <div class="winbtns"><button aria-label="최소화">${icoMin}</button><button aria-label="복원">${icoRestore}</button><button aria-label="닫기">${icoClose}</button></div>
      </header>
      <nav class="tabs">
        ${this.tab("홈", "w1")}${this.tab("삽입", "w2")}${this.tab("페이지 레이아웃", "w3")}${this.tab("수식", "w4")}${this.tab("데이터", "w5")}${this.tab("검토", "w6")}${this.tab("보기", "w7", true)}
        <span class="grow"></span>
        <div class="docbtns"><button aria-label="도움말">${icoHelp}</button><button aria-label="창 최소화">${icoMin}</button><button aria-label="창 복원">${icoRestore}</button><button aria-label="창 닫기">${icoClose}</button></div>
      </nav>
      <section class="ribbon">
        <div class="group"><div class="items">
          ${this.big(icoNormal, "b42", "기본", "", false, true)}
          ${this.big(icoLayout, "b54", "페이지", "레이아웃")}
          ${this.big(icoBreak, "b80", "페이지 나누기", "미리 보기")}
          <span class="sep"></span>
          ${this.big(icoCustom, "b58", "사용자", "지정 보기")}
          ${this.big(icoFull, "b40", "전체", "화면")}
        </div><div class="caption">통합 문서 보기</div></div>
        <div class="group"><div class="checks grow">
          ${this.check("눈금자", true, true)}${this.check("수식 입력줄", true)}
          ${this.check("눈금선", true)}${this.check("머리글", true)}
          ${this.check("메시지 표시줄", false, true)}
        </div><div class="caption">표시/숨기기</div></div>
        <div class="group"><div class="items">
          ${this.big(icoZoom, "b58", "확대/축소")}
          ${this.big(ico100, "b42", "100%")}
          ${this.big(icoZoomSel, "b58", "선택 영역", "확대/축소")}
        </div><div class="caption">확대/축소</div></div>
        <div class="group"><div class="items">
          ${this.big(icoNewWin, "b42", "새 창")}
          ${this.big(icoArrange, "b42", "모두", "정렬")}
          ${this.big(icoFreeze, "b42", "틀", "고정", true)}
          <div class="small first"><button>${icoSplit}나누기</button><button>${icoHide}숨기기</button><button class="dim" disabled>${icoUnhide}숨기기 취소</button></div>
          <span class="sep"></span>
          <div class="small second"><button class="dim" disabled>${icoSide}나란히 보기</button><button class="dim" disabled>${icoSync}동시 스크롤</button><button class="dim" disabled>${icoReset}창 위치 다시 정렬</button></div>
          <span class="sep"></span>
          ${this.big(icoWorkspace, "b56", "작업 영역", "저장")}
          ${this.big(icoSwitch, "b42", "창", "전환", true)}
        </div><div class="caption">창</div></div>
        <div class="group"><div class="items">${this.big(icoMacro, "b42", "매크로", "", true)}</div><div class="caption">매크로</div></div>
      </section>
      <section class="formula">
        <input class="name" aria-label="이름 상자" value="L19"><button class="drop" aria-label="이름 목록">${icoCaret}</button>
        <div class="fx"><span class="dot"></span><i>f<sub>x</sub></i></div>
        <input class="entry" aria-label="수식 입력줄"><button class="expand" aria-label="확장">${icoChevrons}</button>
      </section>
      <main class="work">
        <excel-sheet></excel-sheet>
        <div class="vscroll"><span class="split"></span>
          <svg width="9" height="5" viewBox="0 0 9 5"><path d="M0 5h9L4.500 0z" fill="#3a4a6c"/></svg>
          <div class="thumb-v"><svg width="7" height="8" viewBox="0 0 7 8"><path d="M0 .500h7M0 2.500h7M0 4.500h7M0 6.500h7" stroke="#7b8ca8"/></svg></div><div class="rest-v"></div>
          <svg width="9" height="5" viewBox="0 0 9 5"><path d="M0 0h9L4.500 5z" fill="#3a4a6c"/></svg>
        </div>
      </main>
      <section class="bottom">
        <div class="sheets">
          <div class="nav">
            <button aria-label="처음"><svg width="7" height="7" viewBox="0 0 7 7"><path d="M.5 0v7" stroke="currentColor"/><path d="M7 0v7L2 3.500z" fill="currentColor"/></svg></button>
            <button aria-label="이전"><svg width="5" height="7" viewBox="0 0 5 7"><path d="M5 0v7L0 3.500z" fill="currentColor"/></svg></button>
            <button aria-label="다음"><svg width="5" height="7" viewBox="0 0 5 7"><path d="M0 0v7l5-3.500z" fill="currentColor"/></svg></button>
            <button aria-label="마지막"><svg width="7" height="7" viewBox="0 0 7 7"><path d="M6.500 0v7" stroke="currentColor"/><path d="M0 0v7l5-3.500z" fill="currentColor"/></svg></button>
          </div>
          ${["10월1주", "10월2주", "10월3주", "10월4주", "10월5주"].map((s, i) => this.sheetTab(s, i))}
          <button aria-label="워크시트 삽입"><svg width="44" height="15" viewBox="0 0 44 15"><path d="M6 0h37L33 15H-3z" fill="#c9ddf6" stroke="#7c9cca"/><path d="M14.500 4.500h11v7l-3 2h-8z" fill="#e9eff8" stroke="#5d7296"/><path d="M12 1v7M8.500 4.500h7M9.500 2l5 5M14.500 2l-5 5" stroke="#e89a1c"/></svg></button>
        </div>
        <div class="hscroll"><span class="grip-h"></span>
          <svg class="arrow" width="5" height="9" viewBox="0 0 5 9"><path d="M5 0v9L0 4.500z" fill="#3a4a6c"/></svg>
          <div class="space-l"></div>
          <div class="thumb-h"><svg width="8" height="7" viewBox="0 0 8 7"><path d="M.5 0v7M2.500 0v7M4.500 0v7M6.500 0v7" stroke="#7b8ca8"/></svg></div>
          <div class="space-r"></div>
          <svg class="arrow" width="5" height="9" viewBox="0 0 5 9"><path d="M0 0v9l5-4.500z" fill="#3a4a6c"/></svg>
          <span class="grip-h"></span><span class="corner-h"></span>
        </div>
      </section>
      <footer class="status">
        <span class="ready">준비</span><span class="grow"></span>
        <div class="zoom">
          <div class="views">
            <button class="on" aria-label="기본"><svg width="13" height="11" viewBox="0 0 13 11"><path d="M.5.500h12v10H.5z" fill="#fff" stroke="#555"/><path d="M4.500 0v11M8.500 0v11M0 3.500h13M0 7.500h13" stroke="#555"/></svg></button>
            <button aria-label="페이지 레이아웃"><svg width="13" height="12" viewBox="0 0 13 12"><path d="M.5.500h12v11H.5z" fill="#ddd" stroke="#444"/><path d="M3.500 2.500h6v7h-6z" fill="#fff" stroke="#444"/><path d="M5 4.500h3M5 6.500h3" stroke="#777"/></svg></button>
            <button aria-label="페이지 나누기 미리 보기"><svg width="13" height="12" viewBox="0 0 13 12"><path d="M.5.500h12v11H.5z" fill="#ccc" stroke="#444"/><path d="M2.500.500h3v7h-3zM7.500.500h3v7h-3z" fill="#fff" stroke="#555"/></svg></button>
          </div>
          <span class="pct">75%</span>
          <button aria-label="축소"><svg width="17" height="17" viewBox="0 0 17 17"><circle cx="8.500" cy="8.500" r="7.500" fill="#dce8f7" stroke="#3f6296"/><path d="M4 8.500h9" stroke="#33435c" stroke-width="2"/></svg></button>
          <input type="range" min="0" max="100" value="36" aria-label="확대/축소">
          <button aria-label="확대"><svg width="17" height="17" viewBox="0 0 17 17"><circle cx="8.500" cy="8.500" r="7.500" fill="#dce8f7" stroke="#3f6296"/><path d="M4 8.500h9M8.500 4v9" stroke="#33435c" stroke-width="2"/></svg></button>
        </div>
      </footer>
      <footer class="taskbar">
        <button class="start" aria-label="시작">${icoStart}</button>
        <button class="task t1" aria-label="Internet Explorer">${icoIE}</button><span class="stack"></span>
        <button class="task t2" aria-label="탐색기">${icoFolder}</button><span class="stack"></span>
        <button class="t3" aria-label="Chrome">${icoChrome}</button>
        <button class="task t4" aria-label="Excel">${icoExcel}</button>
        <span class="grow"></span>
        <div class="tray">${icoPen}<span class="ime">가 漢</span>${icoUp}${icoFlag}${icoNet}${icoSound}
          <div class="clock">오후 5:36<br>2018-11-05</div></div>
        <button class="peek" aria-label="바탕 화면 보기"></button>
      </footer>
    `;
  }
}
